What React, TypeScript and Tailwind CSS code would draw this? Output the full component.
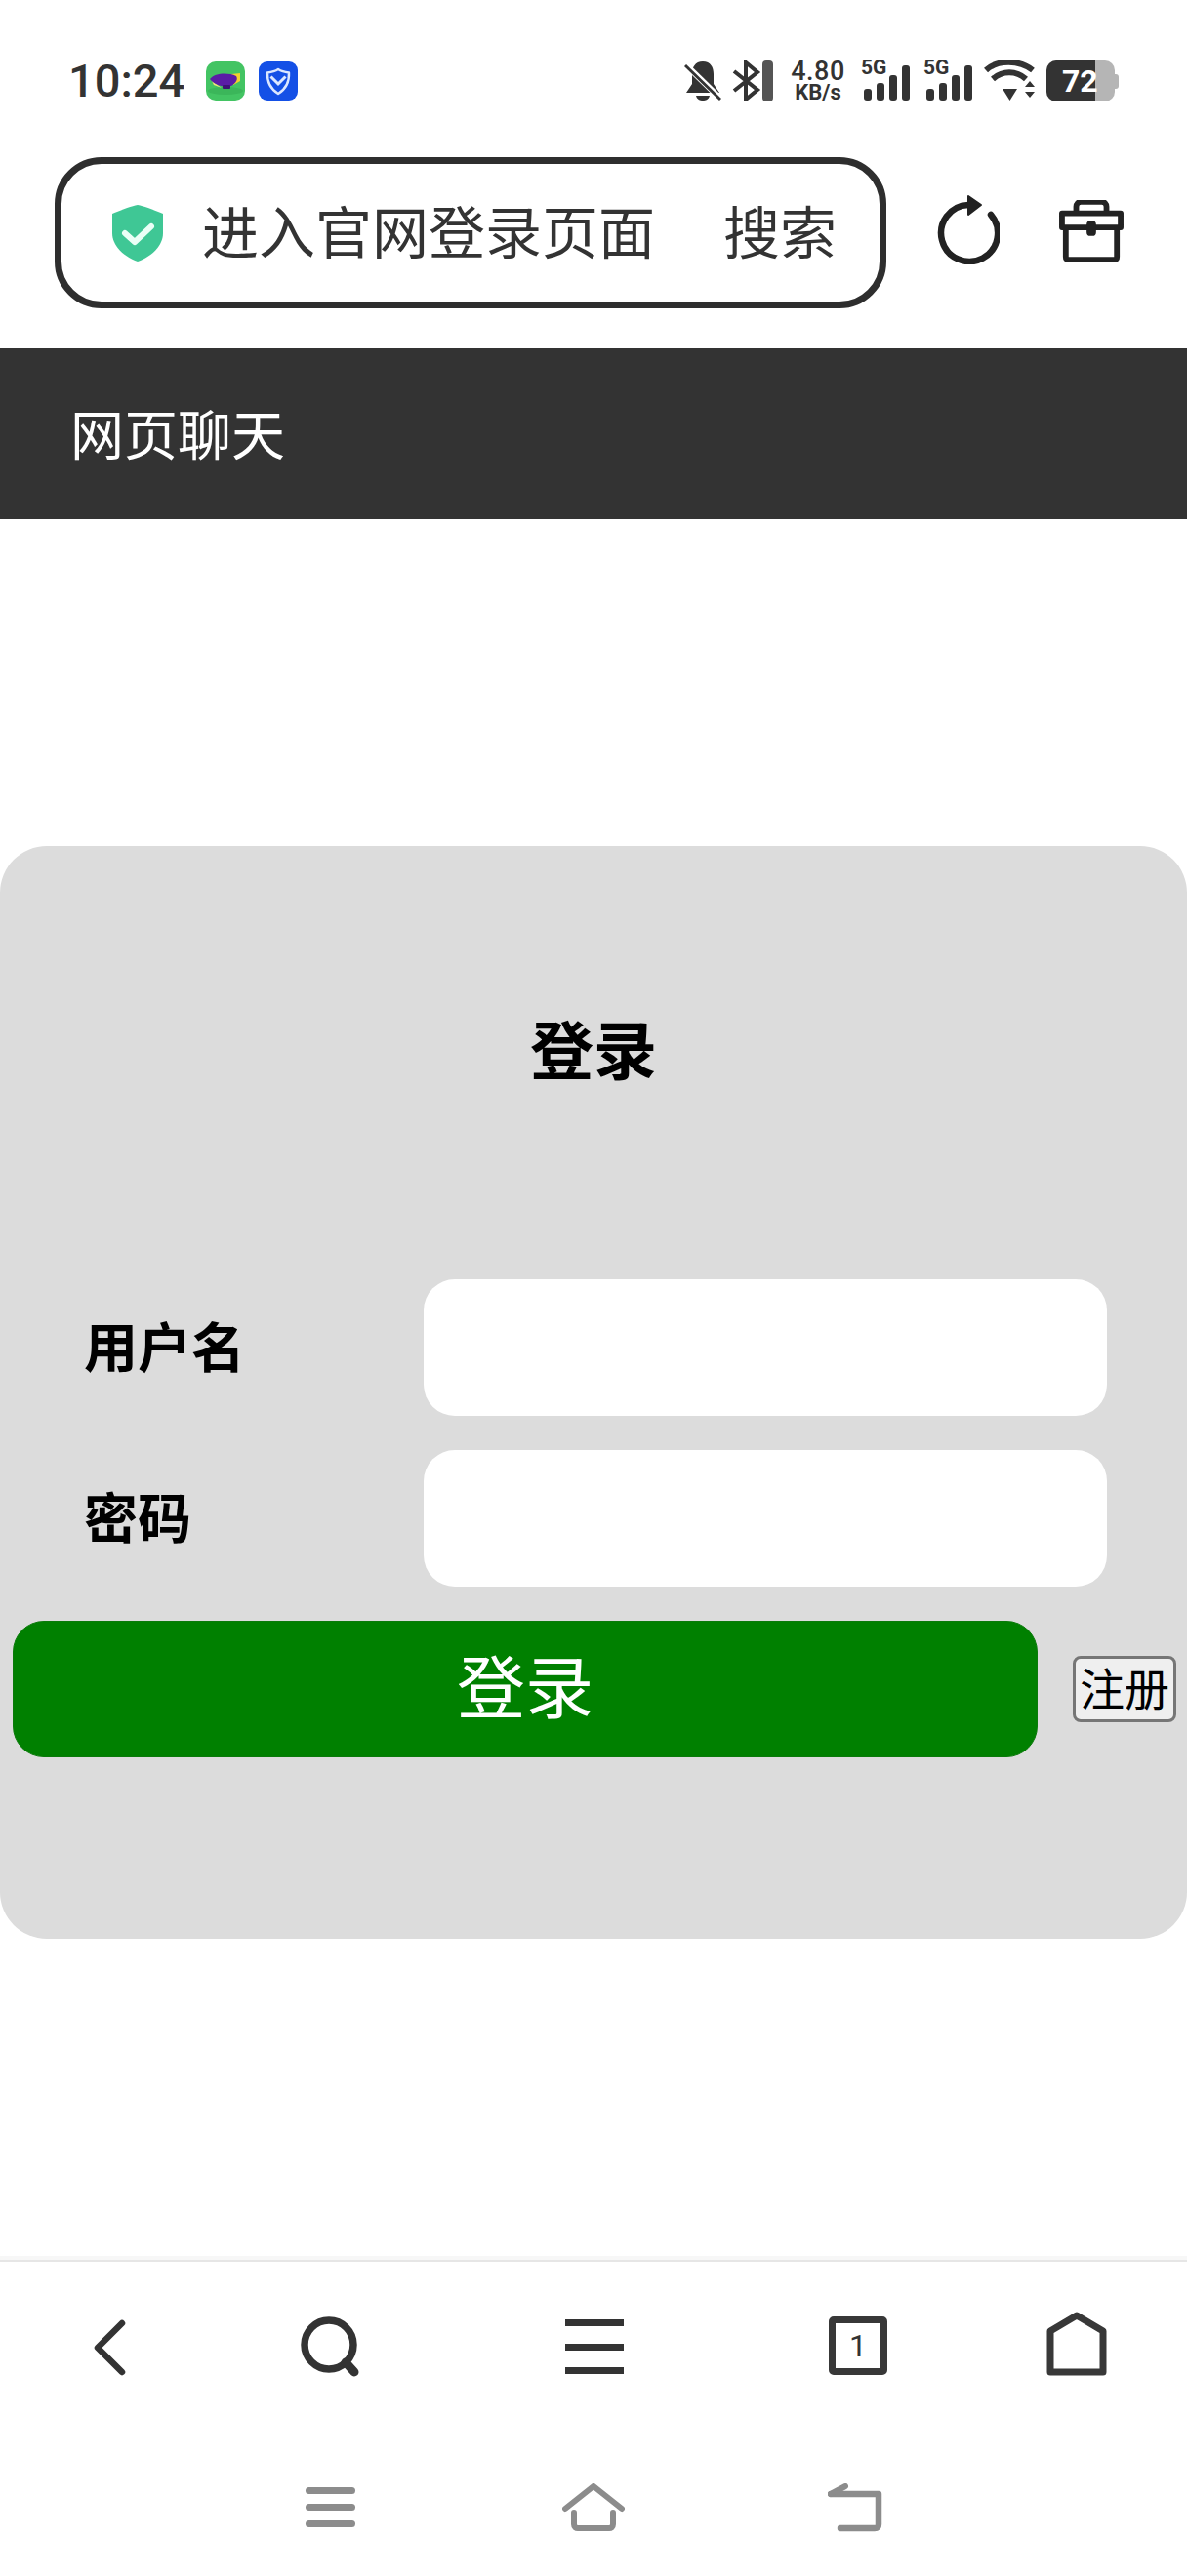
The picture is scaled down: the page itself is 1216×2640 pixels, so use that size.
const cjk = { fontFamily: '"Noto Sans CJK SC", "Noto Sans", sans-serif' };

function AirshipIcon() {
  return (
    <svg width="40" height="40" viewBox="0 0 40 40" className="shrink-0">
      <rect width="40" height="40" rx="10" fill="#43c463" />
      <ellipse cx="20" cy="30" rx="18" ry="4" fill="#3bb65a" />
      <path d="M26 13 L35 12 L35 20 L28 24 Z" fill="#f2d12f" />
      <path d="M6 20 L16 27 L8 24 Z" fill="#f2e27a" />
      <path d="M4 18 C9 12 22 11 31 15 C33 18 31 22 26 25 C17 27 9 24 4 18 Z" fill="#5a1ea6" />
      <rect x="17" y="24" width="8" height="4" rx="1" fill="#3c1474" />
    </svg>
  );
}

function ShieldBlueIcon() {
  return (
    <svg width="40" height="40" viewBox="0 0 40 40" className="shrink-0">
      <rect width="40" height="40" rx="9" fill="#1450e6" />
      <path d="M20 8 C23 10 27 11 31 11.5 C31.5 21 28 28 20 33 C12 28 8.5 21 9 11.5 C13 11 17 10 20 8 Z" fill="none" stroke="#dbe7ff" strokeWidth="2.4" strokeLinejoin="round" />
      <path d="M12.5 15.5 L20 23 L27.5 15.5" fill="none" stroke="#dbe7ff" strokeWidth="3" />
    </svg>
  );
}

function Signal() {
  return (
    <div className="relative h-[42px] w-[50px] shrink-0">
      <span className="absolute left-0 top-[-3px] text-[21px] font-bold leading-[21px] text-[#333]" style={{ fontFamily: 'Roboto, sans-serif' }}>5G</span>
      <svg width="50" height="42" viewBox="0 0 50 42" className="absolute left-0 top-0">
        <rect x="3" y="29" width="8" height="12" rx="3" fill="#333" />
        <rect x="16" y="23" width="8" height="18" rx="3" fill="#333" />
        <rect x="29" y="15" width="8" height="26" rx="3" fill="#333" />
        <rect x="42" y="5" width="8" height="36" rx="3" fill="#333" />
      </svg>
    </div>
  );
}

function StatusBar() {
  return (
    <div className="flex h-[161px] items-start justify-between pl-[70px] pr-[70px] pt-[62px]">
      <div className="flex items-center">
        <span className="w-[141px] text-[47px] font-medium leading-[42px] text-[#333]" style={{ fontFamily: 'Roboto, sans-serif' }}>10:24</span>
        <AirshipIcon />
        <div className="w-[14px]" />
        <ShieldBlueIcon />
      </div>
      <div className="flex h-[42px] items-center">
        <svg width="38" height="42" viewBox="0 0 38 42" className="shrink-0">
          <path d="M19 1 C27 1 30 7 30 14 L30 24 L36 33 L2 33 L8 24 L8 14 C8 7 11 1 19 1 Z" fill="#333" />
          <path d="M12 36 L26 36 C25 40 22 41 19 41 C16 41 13 40 12 36 Z" fill="#333" />
          <path d="M0 3 L38 40" stroke="#fff" strokeWidth="6" />
          <path d="M1 5 L37 40" stroke="#333" strokeWidth="3" />
        </svg>
        <svg width="42" height="42" viewBox="0 0 42 42" className="ml-[11px] shrink-0">
          <path d="M2 11 L26 30 L14 40 L14 2 L26 12 L2 31" fill="none" stroke="#333" strokeWidth="4" />
          <rect x="31" y="0" width="11" height="42" rx="4" fill="#555" />
        </svg>
        <div className="ml-[17px] flex w-[58px] shrink-0 flex-col items-center text-[#333]" style={{ fontFamily: 'Roboto, sans-serif' }}>
          <span className="whitespace-nowrap text-[27px] font-medium leading-[23px] tracking-[0.5px]">4.80</span>
          <span className="whitespace-nowrap text-[22px] font-bold leading-[19px]">KB/s</span>
        </div>
        <div className="ml-[15px] flex gap-[14px]">
          <Signal />
          <Signal />
        </div>
        <svg width="54" height="42" viewBox="0 0 54 42" className="ml-[12px] shrink-0">
          <path d="M2 10 C14 -1 36 -1 50 10" fill="none" stroke="#333" strokeWidth="6" />
          <path d="M9 19 C19 10 33 10 43 19" fill="none" stroke="#333" strokeWidth="6" />
          <path d="M19 29 L34 29 L26.5 41 Z" fill="#333" />
          <path d="M42 27 L47 21 L52 27 Z M42 32 L52 32 L47 38 Z" fill="#333" />
        </svg>
        <div className="ml-[10px] flex shrink-0 items-center">
          <div className="relative flex h-[42px] w-[70px] items-center overflow-hidden rounded-[10px] bg-[#b5b5b5]">
            <div className="h-full w-[50px] bg-[#333]" />
            <span className="absolute left-[16px] text-[32px] font-bold leading-[42px] text-white" style={{ fontFamily: 'Roboto, sans-serif' }}>72</span>
          </div>
          <div className="h-[15px] w-[4px] rounded-r-[3px] bg-[#b5b5b5]" />
        </div>
      </div>
    </div>
  );
}

function AddressBar() {
  return (
    <div className="flex h-[196px] items-start">
      <div className="ml-[56px] flex h-[155px] w-[852px] items-center rounded-[48px] border-[7px] border-[#2e2e2e] pl-[50px]">
        <svg width="56" height="60" viewBox="0 0 56 60" className="shrink-0">
          <path d="M28 1 C34 2 42 5 54 10 L54 30 C54 44 40 55 28 59 C16 55 2 44 2 30 L2 10 C14 5 22 2 28 1 Z" fill="#3fc795" />
          <path d="M15 30 L25 39 L42 23" fill="none" stroke="#eafff6" strokeWidth="6" strokeLinecap="round" strokeLinejoin="round" />
        </svg>
        <span className="ml-[38px] whitespace-nowrap pb-[7px] text-[58px] leading-[70px] text-[#333]" style={cjk}>进入官网登录页面</span>
        <span className="ml-[70px] whitespace-nowrap pb-[7px] text-[58px] leading-[70px] text-[#333]" style={cjk}>搜索</span>
      </div>
      <svg width="64" height="71" viewBox="0 0 64 71" className="ml-[52px] mt-[39px] shrink-0">
        <path d="M55 20 A29 29 0 1 1 32 10" fill="none" stroke="#222" strokeWidth="6.5" strokeLinecap="round" />
        <path d="M32 1 L45 10 L32 20 Z" fill="#222" stroke="#222" strokeWidth="2" strokeLinejoin="round" />
      </svg>
      <svg width="66" height="64" viewBox="0 0 68 66" className="ml-[61px] mt-[44px] shrink-0">
        <path d="M18 14 L18 7 C18 4 20 2 23 2 L45 2 C48 2 50 4 50 7 L50 14" fill="none" stroke="#222" strokeWidth="6" />
        <path d="M3 14 L65 14 L65 29 L3 29 Z" fill="none" stroke="#222" strokeWidth="6" strokeLinejoin="round" />
        <path d="M7 29 L7 60 C7 62 8 63 10 63 L58 63 C60 63 61 62 61 60 L61 29" fill="none" stroke="#222" strokeWidth="6" />
        <rect x="29" y="22" width="10" height="16" rx="4" fill="#222" />
      </svg>
    </div>
  );
}

function Field({ label }: { label: string }) {
  return (
    <div className="flex h-[140px] items-center pl-[86px]">
      <label className="w-[348px] pb-[8px] text-[55px] font-bold leading-[70px] text-black" style={cjk}>{label}</label>
      <input className="h-[140px] w-[700px] rounded-[32px] bg-white" />
    </div>
  );
}

function LoginCard() {
  return (
    <div className="flex h-[1120px] flex-col rounded-[48px] bg-[#dcdcdc]">
      <h2 className="mt-[161px] text-center text-[65px] font-bold leading-[90px] text-black" style={cjk}>登录</h2>
      <div className="mt-[193px] flex flex-col gap-[35px]">
        <Field label="用户名" />
        <Field label="密码" />
      </div>
      <div className="mt-[35px] flex items-center pl-[13px]">
        <button className="h-[140px] w-[1050px] rounded-[32px] border border-[#0a7a0a] bg-[#008000] pb-[10px] text-[70px] leading-[80px] text-white" style={cjk}>登录</button>
        <button className="ml-[36px] h-[68px] w-[106px] rounded-[8px] border-[3px] border-[#767676] bg-[#efefef] pb-[6px] text-[46px] leading-[50px] text-black" style={cjk}>注册</button>
      </div>
    </div>
  );
}

function Toolbar() {
  return (
    <div className="flex h-[142px] items-start">
      <svg width="34" height="58" viewBox="0 0 34 58" className="ml-[95px] mt-[59px] shrink-0">
        <path d="M30 4 L5 29 L30 54" fill="none" stroke="#333" strokeWidth="6.5" strokeLinecap="round" strokeLinejoin="round" />
      </svg>
      <svg width="62" height="62" viewBox="0 0 62 62" className="ml-[179px] mt-[56px] shrink-0">
        <circle cx="29" cy="29" r="25" fill="none" stroke="#333" strokeWidth="7.5" />
        <path d="M46 47 L55 57" stroke="#333" strokeWidth="9" strokeLinecap="round" />
      </svg>
      <div className="ml-[209px] mt-[59px] flex h-[56px] w-[60px] shrink-0 flex-col justify-between">
        <div className="h-[7px] bg-[#333]" />
        <div className="h-[7px] bg-[#333]" />
        <div className="h-[7px] bg-[#333]" />
      </div>
      <div className="ml-[210px] mt-[56px] flex h-[60px] w-[60px] shrink-0 items-center justify-center rounded-[5px] border-[7px] border-[#383838]">
        <span className="text-[32px] leading-[32px] text-[#333]" style={{ fontFamily: 'Roboto, sans-serif' }}>1</span>
      </div>
      <svg width="62" height="66" viewBox="0 0 62 66" className="ml-[163px] mt-[51px] shrink-0">
        <path d="M31 4 L58 20 L58 62 L4 62 L4 20 Z" fill="none" stroke="#383838" strokeWidth="7" strokeLinejoin="round" />
      </svg>
    </div>
  );
}

function NavBar() {
  return (
    <div className="flex h-[180px] items-start">
      <div className="ml-[313px] mt-[89px] flex h-[41px] w-[51px] shrink-0 flex-col justify-between">
        <div className="h-[7px] rounded-full bg-[#8c8c8c]" />
        <div className="h-[7px] rounded-full bg-[#8c8c8c]" />
        <div className="h-[7px] rounded-full bg-[#8c8c8c]" />
      </div>
      <svg width="64" height="50" viewBox="0 0 64 50" className="ml-[212px] mt-[85px] shrink-0">
        <path d="M3 26 L32 3 L61 26" fill="none" stroke="#8c8c8c" strokeWidth="6" strokeLinecap="round" strokeLinejoin="round" />
        <path d="M12 30 L12 42 C12 45 14 46 16 46 L48 46 C50 46 52 45 52 42 L52 30" fill="none" stroke="#8c8c8c" strokeWidth="6" strokeLinecap="round" />
      </svg>
      <svg width="56" height="50" viewBox="0 0 56 50" className="ml-[208px] mt-[85px] shrink-0">
        <path d="M3 11 L52 11 L52 42 C52 45 51 46 48 46 L13 46" fill="none" stroke="#8c8c8c" strokeWidth="6.5" strokeLinecap="round" strokeLinejoin="round" />
        <path d="M3 11 L18 3" fill="none" stroke="#8c8c8c" strokeWidth="6" strokeLinecap="round" />
      </svg>
    </div>
  );
}

export default function App() {
  return (
    <div className="flex h-[2640px] w-[1216px] flex-col overflow-hidden bg-white">
      <StatusBar />
      <AddressBar />
      <header className="flex h-[175px] items-center bg-[#333] pl-[72px]">
        <span className="pb-[5px] text-[55px] leading-[70px] text-white" style={cjk}>网页聊天</span>
      </header>
      <div className="h-[335px]" />
      <LoginCard />
      <div className="h-[325px]" />
      <div className="h-[6px] border-b-2 border-[#e6e6e6] bg-[#f7f7f7]" />
      <Toolbar />
      <NavBar />
    </div>
  );
}
